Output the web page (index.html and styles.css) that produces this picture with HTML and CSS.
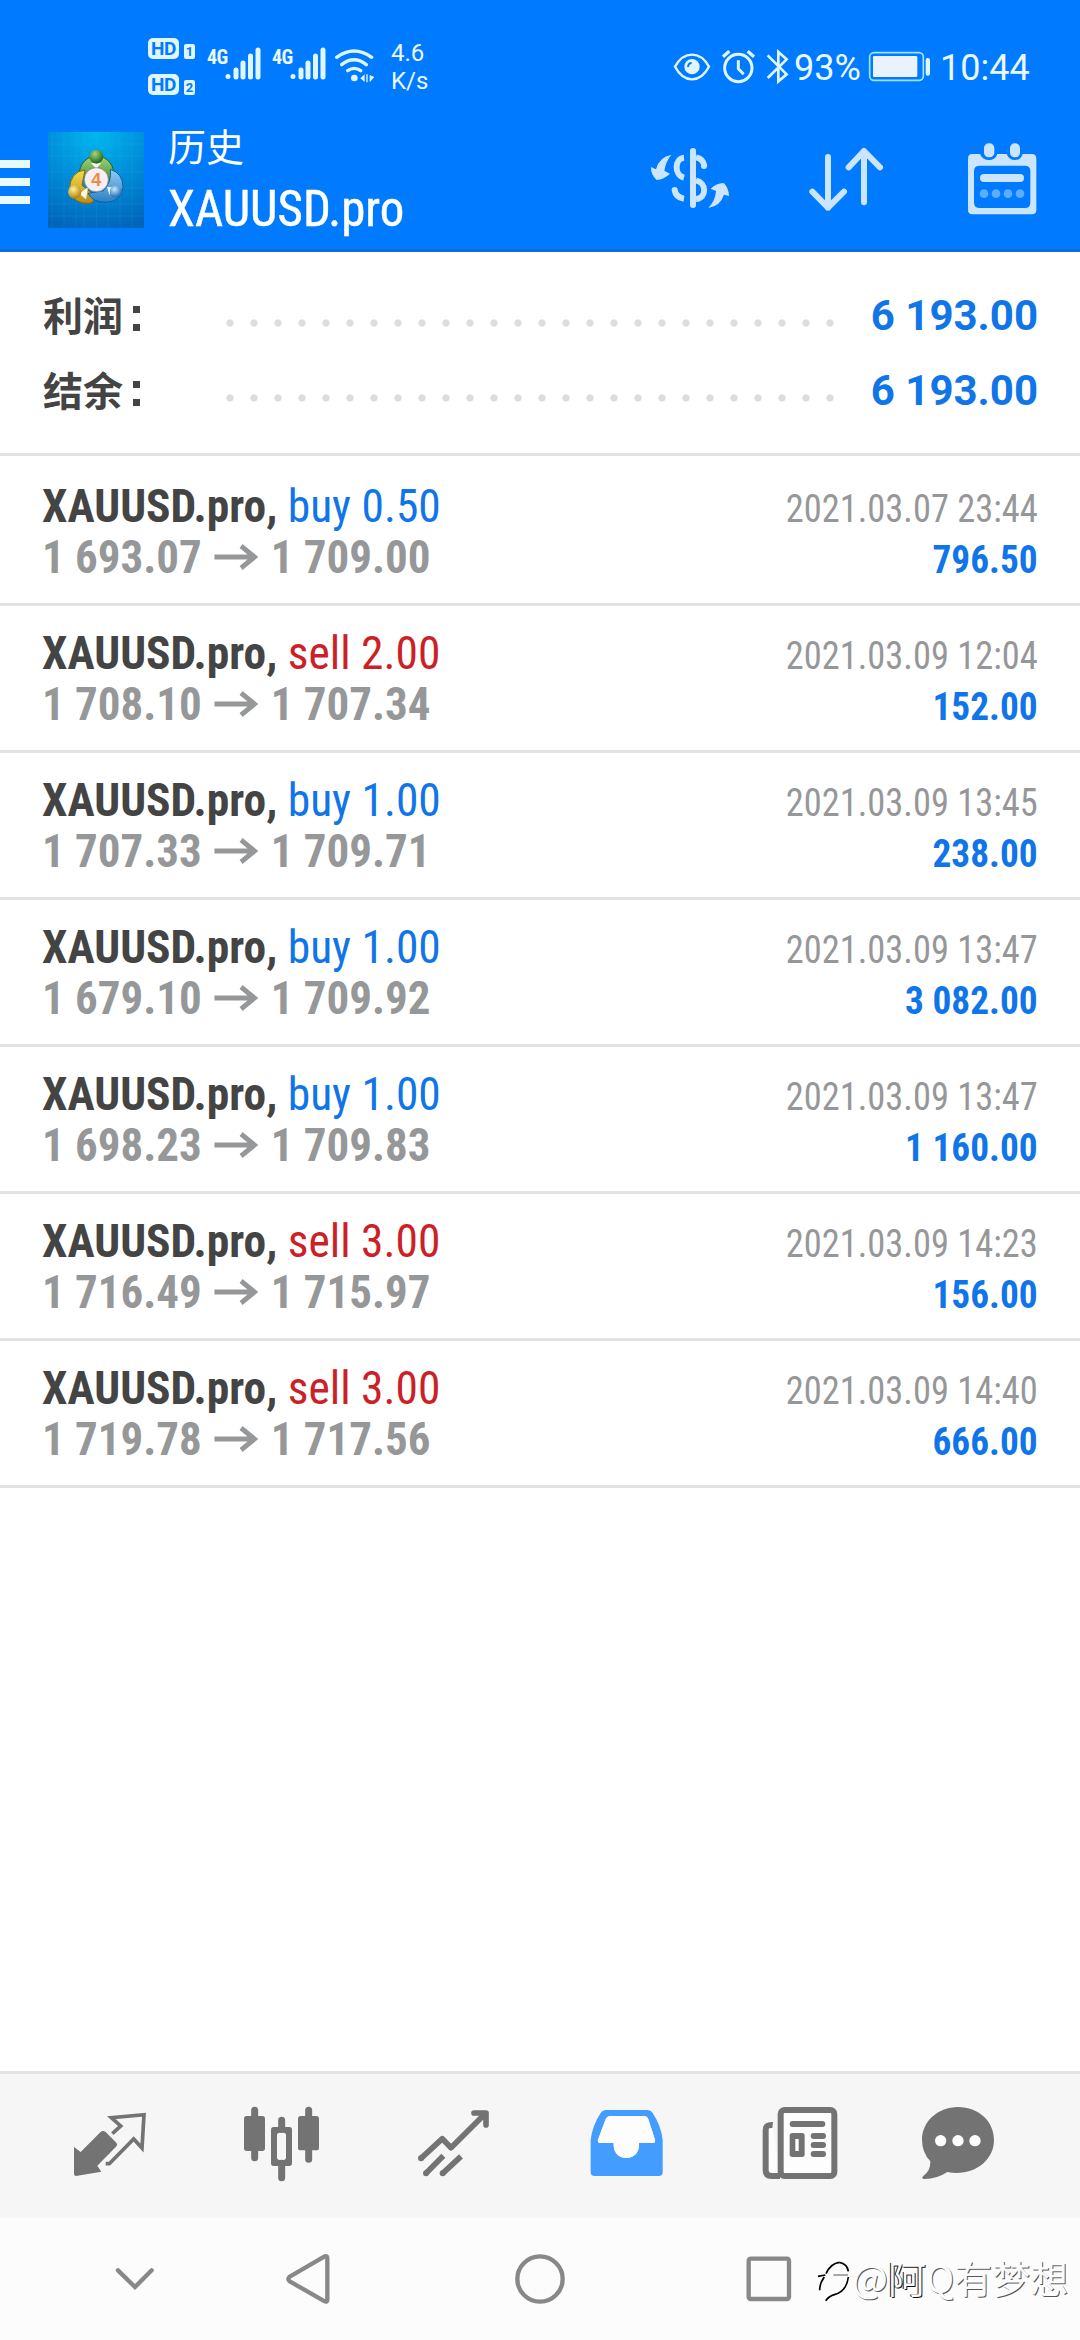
FILE: index.html
```html
<!DOCTYPE html>
<html lang="zh-CN">
<head>
<meta charset="utf-8">
<title>XAUUSD.pro</title>
<link rel="stylesheet" href="styles.css">
</head>
<body>
<div class="app">
<header class="top">
  <div class="status">
    <div class="hd-col">
      <div class="hd"><b class="hd-tag">HD</b><b class="sim">1</b></div>
      <div class="hd"><b class="hd-tag">HD</b><b class="sim">2</b></div>
    </div>
    <div class="signal"><b class="net">4G</b><svg width="36" height="36" viewBox="0 0 36 36"><path d="M3 30.500V30.500M11 24V31M18 17V31M25.500 10V31M33 4V31"/></svg></div>
    <div class="signal second"><b class="net">4G</b><svg width="36" height="36" viewBox="0 0 36 36"><path d="M3 30.500V30.500M11 24V31M18 17V31M25.500 10V31M33 4V31"/></svg></div>
    <svg class="wifi" width="42" height="36" viewBox="612 84 126 108"><g fill="none" stroke="#e0f6ff" stroke-width="10" stroke-linecap="round"><path d="M620 112Q672 74 725 112M635 134Q672 105 709 134M653 152Q673 138 692 152"/></g><circle cx="673" cy="174" r="10" fill="#e0f6ff"/><path d="M704 163V186L691 175ZM709 163h4v24h-4ZM719 165l14 6-14 16Z" fill="#e0f6ff"/></svg>
    <div class="rate">4.6<br>K/s</div>
    <svg class="sys" width="116" height="40" viewBox="66 50 348 120" fill="none" stroke="#e0f6ff">
      <path d="M72 109Q92 73 123 73T174 109Q154 147 123 147T72 109Z" stroke-width="7"/><circle cx="123" cy="109" r="23" fill="#e0f6ff" stroke="none"/><path d="M111 110Q112 98 122 98" stroke="#007aff" stroke-width="6"/>
      <circle cx="262" cy="113" r="41" stroke-width="9"/><path d="M262 90V115L278 132" stroke-width="9"/><path d="M216 79L235 63M290 63L309 79" stroke-width="10"/>
      <path d="M350 75L407 132L382 153V65L407 87L350 143" stroke-width="8"/>
    </svg>
    <span class="pct">93%</span>
    <svg class="battery" width="64" height="34" viewBox="652 60 192 102"><rect x="657" y="68" width="161" height="83" rx="13" fill="none" stroke="#9de4ff" stroke-width="5"/><rect x="667" y="78" width="133" height="63" rx="4" fill="#e8f3ff"/><rect x="825" y="84" width="13" height="53" rx="6" fill="#e0f6ff"/></svg>
    <span class="clock">10:44</span>
  </div>
  <div class="bar">
    <div class="burger"><i></i><i></i><i></i></div>
    <svg class="logo" width="96" height="96" viewBox="0 0 288 288">
      <defs>
        <radialGradient id="bg" cx=".5" cy="0" r="1.050"><stop offset="0" stop-color="#00b8ee"/><stop offset=".45" stop-color="#0092dc"/><stop offset="1" stop-color="#0064bb"/></radialGradient>
        <linearGradient id="gr" x2="0" y2="1"><stop stop-color="#a3d37c"/><stop offset="1" stop-color="#2c7c22"/></linearGradient>
        <linearGradient id="ye" x2="0" y2="1"><stop stop-color="#f2dc4c"/><stop offset="1" stop-color="#bd8c10"/></linearGradient>
        <linearGradient id="bl" x2="0" y2="1"><stop stop-color="#92cdf2"/><stop offset="1" stop-color="#2b7fc6"/></linearGradient>
        <radialGradient id="gb" cx=".4" cy=".3" r=".7"><stop stop-color="#a5d680"/><stop offset="1" stop-color="#1c6619"/></radialGradient>
        <radialGradient id="yb" cx=".4" cy=".3" r=".7"><stop stop-color="#fff09b"/><stop offset="1" stop-color="#b18008"/></radialGradient>
        <radialGradient id="bb" cx=".4" cy=".3" r=".7"><stop stop-color="#c4e8ff"/><stop offset="1" stop-color="#1c6bb8"/></radialGradient>
      </defs>
      <rect width="288" height="288" fill="url(#bg)"/>
      <path d="M12 0V288M48 0V288M84 0V288M108 0V288M145 0V288M180 0V288M216 0V288M252 0V288M0 36H288M0 72H288M0 120H288M0 168H288M0 216H288M0 252H288" stroke="#63c9f2" stroke-opacity=".16" stroke-width="2"/>
      <path d="M95 130A51 51 0 1 1 190 148L165 168L103 132Z" fill="url(#gr)" stroke="#1d6524" stroke-width="3"/>
      <path d="M111 114Q66 118 64 175Q78 218 126 214Q143 208 137 188L102 160Z" fill="url(#ye)" stroke="#876a0c" stroke-width="3"/>
      <path d="M187 112Q225 124 225 166Q218 211 172 211Q132 210 120 184L166 176Q192 150 187 112Z" fill="url(#bl)" stroke="#145c9b" stroke-width="3"/>
      <path d="M129 93H160L145 111ZM94 185L120 165L114 202ZM177 164L208 169L184 188Z" fill="#fff" opacity=".9"/>
      <circle cx="145" cy="74" r="21" fill="url(#gb)"/><circle cx="80" cy="180" r="20" fill="url(#yb)"/><circle cx="203" cy="179" r="18" fill="url(#bb)"/>
      <circle cx="145" cy="143" r="36" fill="#f3eff3" stroke="#827a80" stroke-width="2"/>
      <text x="145" y="163" text-anchor="middle" class="four">4</text>
    </svg>
    <div class="titles"><div class="t1">历史</div><div class="t2"><span class="cn">XAUUSD.pro</span></div></div>
    <svg class="a1" width="82" height="80" viewBox="87 60 246 240" fill="#cce5ff"><path d="M154 104Q118 110 108 148L93 141Q92 164 110 180Q132 178 150 161L133 152Q138 123 154 104ZM265 264Q302 257 312 224L327 228Q326 202 311 189Q289 190 272 206L288 213Q287 240 265 264Z"/><path d="M219 93V255" stroke="#cce5ff" stroke-width="18" stroke-linecap="round"/><path d="M192 113C164 115 161 165 192 173M164 210Q167 232 192 236M228 112Q250 116 253 138M228 181C260 188 261 234 228 237" fill="none" stroke="#cce5ff" stroke-width="18"/><circle cx="252" cy="138" r="9"/><circle cx="164" cy="210" r="9"/></svg>
    <svg class="a2" width="82" height="80" viewBox="555 60 246 240" fill="none" stroke="#cce5ff" stroke-width="18" stroke-linecap="round" stroke-linejoin="round"><path d="M624 111V263M577 215L624 263L672 215M732 247V93M686 142L732 93L780 142"/></svg>
    <svg class="a3" width="72" height="80" viewBox="1038 60 216 240"><path fill="#cce5ff" fill-rule="evenodd" d="M1056 102H1080Q1088 120 1107 120T1132 102H1160Q1167 120 1185 120T1208 102H1236Q1249 102 1249 116V270Q1249 283 1236 283H1058Q1044 283 1044 270V116Q1044 102 1056 102ZM1080 137Q1062 137 1062 153V248Q1062 264 1080 264H1214Q1231 264 1231 248V153Q1231 137 1214 137Z"/><g fill="#cce5ff"><rect x="1092" y="70" width="31" height="42" rx="14"/><rect x="1170" y="70" width="30" height="42" rx="14"/><rect x="1080" y="162" width="132" height="24" rx="12"/></g><g fill="#5cacff"><circle cx="1092" cy="221" r="13"/><circle cx="1128" cy="221" r="13"/><circle cx="1164" cy="221" r="13"/><circle cx="1200" cy="221" r="13"/></g></svg>
  </div>
</header>
<section class="summary">
  <div class="sum"><span class="lbl">利润<i class="colon"></i></span><span class="dots"></span><b>6 193.00</b></div>
  <div class="sum"><span class="lbl">结余<i class="colon"></i></span><span class="dots"></span><b>6 193.00</b></div>
</section>
<main class="deals">
  <div class="deal"><div class="sym"><b>XAUUSD.pro,</b> <span class="buy">buy 0.50</span></div><div class="date">2021.03.07 23:44</div><div class="px">1 693.07<svg class="arr" viewBox="0 0 46 26"><path d="M0 13H42M28 2L42 13L28 24"/></svg>1 709.00</div><div class="val">796.50</div></div>
  <div class="deal"><div class="sym"><b>XAUUSD.pro,</b> <span class="sell">sell 2.00</span></div><div class="date">2021.03.09 12:04</div><div class="px">1 708.10<svg class="arr" viewBox="0 0 46 26"><path d="M0 13H42M28 2L42 13L28 24"/></svg>1 707.34</div><div class="val">152.00</div></div>
  <div class="deal"><div class="sym"><b>XAUUSD.pro,</b> <span class="buy">buy 1.00</span></div><div class="date">2021.03.09 13:45</div><div class="px">1 707.33<svg class="arr" viewBox="0 0 46 26"><path d="M0 13H42M28 2L42 13L28 24"/></svg>1 709.71</div><div class="val">238.00</div></div>
  <div class="deal"><div class="sym"><b>XAUUSD.pro,</b> <span class="buy">buy 1.00</span></div><div class="date">2021.03.09 13:47</div><div class="px">1 679.10<svg class="arr" viewBox="0 0 46 26"><path d="M0 13H42M28 2L42 13L28 24"/></svg>1 709.92</div><div class="val">3 082.00</div></div>
  <div class="deal"><div class="sym"><b>XAUUSD.pro,</b> <span class="buy">buy 1.00</span></div><div class="date">2021.03.09 13:47</div><div class="px">1 698.23<svg class="arr" viewBox="0 0 46 26"><path d="M0 13H42M28 2L42 13L28 24"/></svg>1 709.83</div><div class="val">1 160.00</div></div>
  <div class="deal"><div class="sym"><b>XAUUSD.pro,</b> <span class="sell">sell 3.00</span></div><div class="date">2021.03.09 14:23</div><div class="px">1 716.49<svg class="arr" viewBox="0 0 46 26"><path d="M0 13H42M28 2L42 13L28 24"/></svg>1 715.97</div><div class="val">156.00</div></div>
  <div class="deal"><div class="sym"><b>XAUUSD.pro,</b> <span class="sell">sell 3.00</span></div><div class="date">2021.03.09 14:40</div><div class="px">1 719.78<svg class="arr" viewBox="0 0 46 26"><path d="M0 13H42M28 2L42 13L28 24"/></svg>1 717.56</div><div class="val">666.00</div></div>
</main>
<nav class="tabs">
  <svg viewBox="84 132 252 252"><path d="M102 261L122 276L181 217Q189 209 197 216L229 248Q234 254 228 260L172 317L184 335L108 348Q102 348 102 341Z" fill="#737373"/><path d="M217 221L242 198L214 173L312 164L306 264L281 237L208 311H197" fill="none" stroke="#737373" stroke-width="11"/></svg>
  <svg viewBox="597 132 252 252" fill="#737373"><rect x="612" y="168" width="63" height="105" rx="8"/><rect x="774" y="168" width="63" height="103" rx="8"/><path fill-rule="evenodd" d="M701 201H748Q756 201 756 209V310Q756 318 748 318H701Q693 318 693 310V209Q693 201 701 201ZM719 218Q711 218 711 226V292Q711 300 719 300H730Q738 300 738 292V226Q738 218 730 218Z"/><path d="M644 151V293M806 151V298M725 181V208M725 310V353" stroke="#737373" stroke-width="21" stroke-linecap="round"/></svg>
  <svg viewBox="1116 132 252 252" fill="none" stroke="#737373" stroke-width="17" stroke-linejoin="round"><path d="M1143 295L1207 236L1233 263L1337 160M1158 340L1210 287M1208 340L1263 289" /><path d="M1302 159H1338V195" stroke-linecap="round"/><g fill="#737373" stroke="none"><circle cx="1143" cy="295" r="9"/><circle cx="1158" cy="340" r="9"/><circle cx="1208" cy="340" r="9"/></g></svg>
  <svg viewBox="135 132 252 252"><path fill="#439dff" fill-rule="evenodd" d="M197 150H323Q332 150 338 159Q364 199 368 240V336Q368 348 356 348H164Q152 348 152 336V240Q157 196 182 159Q188 150 197 150ZM212 168Q202 168 197 178L175 236Q170 249 181 249H221V257C223 306 295 306 297 257V249H338Q349 249 344 236L325 178Q321 168 311 168Z"/><path d="M212 168H311Q321 168 325 178L344 236Q349 249 338 249H297V257C295 306 223 306 221 257V249H181Q170 249 175 236L197 178Q202 168 212 168Z" fill="#fdfdfd"/></svg>
  <svg viewBox="654 132 252 252"><path d="M698 195Q677 193 677 210V330Q677 348 695 348H720" fill="#fdfdfd" stroke="#737373" stroke-width="18"/><rect x="722" y="150" width="161" height="198" rx="12" fill="#fdfdfd" stroke="#737373" stroke-width="18"/><g fill="#737373"><rect x="749" y="183" width="107" height="18" rx="9"/><rect x="812" y="219" width="46" height="18" rx="9"/><rect x="812" y="246" width="46" height="18" rx="9"/><rect x="812" y="273" width="46" height="18" rx="9"/><rect x="749" y="219" width="45" height="72" rx="8"/></g><path d="M766 237h10v36h-10Z" fill="#fff"/></svg>
  <svg viewBox="1128 132 252 252"><path fill="#737373" d="M1254 141C1316 141 1362 184 1362 240C1362 306 1295 351 1222 336Q1193 356 1153 357Q1142 356 1150 348Q1172 332 1171 304Q1146 277 1146 240C1146 184 1194 141 1254 141Z"/><g fill="#fff"><circle cx="1202" cy="242" r="17"/><circle cx="1254" cy="242" r="17"/><circle cx="1305" cy="242" r="17"/></g></svg>
</nav>
<footer class="sysnav">
  <svg width="40" height="54" viewBox="105 126 120 162"><path d="M114 181L165 231L215 181" stroke-linecap="round"/></svg>
  <svg width="48" height="54" viewBox="616 126 144 162"><path d="M735 139L630 200Q622 207 630 214L735 274Q743 277 743 269V144Q743 136 735 139Z"/></svg>
  <svg width="54" height="54" viewBox="1299 126 162 162"><circle cx="1380" cy="207" r="68"/></svg>
  <svg width="50" height="54" viewBox="132 126 150 162"><rect x="146" y="146" width="121" height="121" rx="6"/></svg>
</footer>
<div class="mark"><svg width="36" height="46" viewBox="350 150 108 138" fill="none" stroke="#000" stroke-width="5"><path d="M356 205L378 201M380 197Q394 166 420 163M375 207Q361 225 361 247"/><path d="M402 201H446" stroke-width="2"/><path d="M420 163Q444 168 447 190M447 207Q442 250 405 260Q390 264 379 278"/></svg><span>@<b>阿</b>Q有梦想</span></div>
</div>
</body>
</html>
```
FILE: styles.css
```css
*{box-sizing:border-box}
body{margin:0;background:#fff;font-family:Roboto,"Noto Sans CJK SC",sans-serif}
svg{display:block;flex:none}
.app{position:relative;width:1080px;height:2340px;display:flex;flex-direction:column;overflow:hidden}
.top{height:252px;background:#007aff;border-bottom:3px solid #0f6cdb;color:#e9f9ff;flex:none}
.status{height:125px;display:flex;align-items:flex-start;padding-left:148px}
.hd-col{display:flex;flex-direction:column;gap:15px;padding-top:38px;width:59px}
.hd{display:flex;align-items:flex-end;gap:5px;height:21px}
.hd-tag{width:31px;height:21px;border-radius:5px;background:#e0f6ff;color:#007aff;font:700 19px/21px Roboto,sans-serif;text-align:center;letter-spacing:-.5px}
.sim{width:11px;height:15px;border-radius:2px;background:#e0f6ff;color:#007aff;font:700 13px/15px Roboto,sans-serif;text-align:center}
.signal{display:flex;width:65px;padding-top:46px}
.net{width:18px;font:700 20px/22px "Roboto Condensed",Roboto,sans-serif;font-stretch:75%;letter-spacing:-.5px}
.signal svg{fill:none;stroke:#e0f6ff;stroke-width:5;stroke-linecap:round}
.wifi{margin:48px 0 0 -3px}
.rate{margin-left:15px;padding-top:39px;width:40px;font-size:24px;line-height:28px;white-space:nowrap}
.sys{margin:47px 0 0 242px}
.pct{margin:47px 0 0 5px;width:68px;font-size:36px;line-height:42px}
.battery{margin:50px 0 0 6px}
.clock{margin:47px 0 0 8px;font-size:36px;line-height:42px}
.bar{display:flex;align-items:flex-start;height:124px;padding-top:7px}
.burger{width:30px;display:flex;flex-direction:column;gap:10px;margin-top:28px}
.burger i{height:8px;background:#e8f9ff}
.logo{margin-left:18px}
.four{font:700 54px "Liberation Sans",sans-serif;fill:#ef8b45}
.titles{width:260px;margin:-10px 0 0 24px}
.t1{font:400 38px/46px "Noto Sans CJK SC",sans-serif;color:#fff}
.t2{font-size:50px;line-height:58px;color:#fff;margin-top:12px}
.t2 .cn{display:inline-block;transform:scaleX(.977);transform-origin:left;-webkit-text-stroke:.5px #fff}
.cn,.deal{font-family:"Roboto Condensed",Roboto,sans-serif;font-stretch:75%;white-space:nowrap}
.a1{margin:8px 0 0 221px}
.a2{margin:8px 0 0 74px}
.a3{margin:8px 0 0 79px}
.summary{height:204px;border-bottom:3px solid #e3e3e3;padding:26px 42px 0 43px;flex:none}
.sum{height:75px;display:flex;align-items:center}
.lbl{display:flex;align-items:center;width:178px;font:700 40px/75px "Noto Sans CJK SC",sans-serif;color:#444;margin-top:-3px}
.colon{width:7px;height:25px;margin:9px 0 0 10px;border:solid #444;border-width:7px 0}
.dots{width:624px;height:8px;margin-top:14px;background:radial-gradient(circle at 4px 4px,#dcdcdc 3.2px,transparent 4px) 5px 0/24px 8px}
.sum b{margin-left:auto;font-size:42px;line-height:75px;color:#0f75e8}
.deals{padding-top:3px}
.deal{height:147px;border-bottom:3px solid #e3e3e3;padding:21px 42px 0;display:grid;grid-template-columns:1fr auto;grid-template-rows:51px 51px;align-items:baseline;line-height:51px}
.sym{font-size:47px;color:#444;transform:scaleX(.967);transform-origin:left}
.px{font-size:47px;font-weight:700;color:#969799;display:flex;align-items:baseline;transform:scaleX(.957);transform-origin:left}
.arr{width:46px;height:26px;margin:0 13px;fill:none;stroke:#969799;stroke-width:5;transform:translateY(-3px)}
.buy{color:#0f75e8}.sell{color:#cc1f28}
.date{font-size:39px;color:#969799;text-align:right;transform:scaleX(.934);transform-origin:right}
.val{font-size:39px;font-weight:700;color:#0f75e8;text-align:right;transform:scaleX(.957);transform-origin:right}
.tabs{margin-top:auto;height:147px;flex:none;background:#f6f6f6;border-top:3px solid #e3e3e3;padding:30px 0 0 68px;display:grid;grid-template-columns:171px 173px 173px 173px 158px 84px}
.tabs svg{width:84px;height:84px}
.sysnav{height:122px;flex:none;background:#fcfcfc;display:flex;padding:34px 0 0 115px}
.sysnav svg{fill:none;stroke:#888;stroke-width:13}
.sysnav svg:nth-child(2){margin-left:130px}
.sysnav svg:nth-child(3){margin-left:180px}
.sysnav svg:nth-child(4){margin-left:177px}
.mark{position:absolute;left:816px;top:2254px;display:flex;color:#fcfcfc;font:400 38px/46px "Noto Sans CJK SC",sans-serif;text-shadow:1px 1px 0 #555;white-space:nowrap}
.mark svg{margin-top:4px}
.mark b{font-weight:400;text-shadow:-1px 0 0 #111,1px 1px 0 #111}
```
